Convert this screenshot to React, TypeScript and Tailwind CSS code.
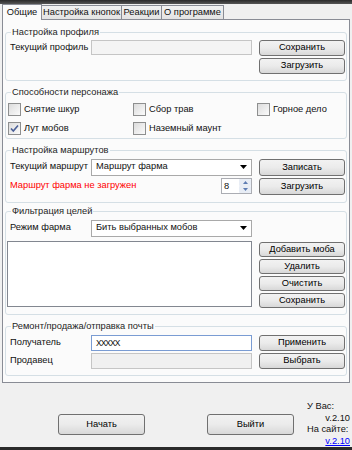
import React from "react";

function Btn({ label, className = "" }: { label: string; className?: string }) {
  return (
    <div
      className={`flex items-center justify-center whitespace-nowrap rounded-[3px] border border-[#707070] bg-gradient-to-b from-[#f2f2f2] via-[#ebebeb] to-[#d8d8d8] leading-none text-black ${className}`}
    >
      {label}
    </div>
  );
}

function Group({ title, className = "", children }: { title: string; className?: string; children?: React.ReactNode }) {
  return (
    <div className={`relative rounded-[3px] border border-[#d5dfe5] ${className}`}>
      <span className="absolute -top-[7px] left-[5px] whitespace-nowrap bg-[#fbfbfb] px-[1px] leading-[13px] text-[#1e1e1e]">
        {title}
      </span>
      {children}
    </div>
  );
}

function Check({ label, checked = false }: { label: string; checked?: boolean }) {
  return (
    <div className="flex items-center gap-[3px] whitespace-nowrap">
      <div className="flex h-[13px] w-[13px] items-center justify-center border border-[#8e8f8f] bg-gradient-to-br from-[#dcdcdc] to-[#fbfbfb]">
        {checked && (
          <svg width="11" height="11" viewBox="0 0 11 11">
            <path d="M2 5.5 L4.3 8 L9 2.5" fill="none" stroke="#4a5f97" strokeWidth="1.6" />
          </svg>
        )}
      </div>
      <span>{label}</span>
    </div>
  );
}

function Select({ value }: { value: string }) {
  return (
    <div className="flex h-[17px] w-[161px] items-center justify-between border border-[#a9a9a9] bg-white pl-[4px] pr-[4px]">
      <span className="whitespace-nowrap">{value}</span>
      <svg width="7" height="4" viewBox="0 0 7 4">
        <polygon points="0,0 7,0 3.5,4" fill="#000" />
      </svg>
    </div>
  );
}

const tabs = ["Общие", "Настройка кнопок", "Реакции", "О программе"];
const tabW = ["w-[40px]", "w-[81px]", "w-[41px]", "w-[63px]"];

export default function App() {
  return (
    <div className="flex h-[450px] w-[352px] flex-col overflow-hidden whitespace-nowrap bg-[#f0f0f0] font-['Liberation_Sans',Arial,sans-serif] text-[9.3px] text-[#111]">
      <div className="h-[4px] bg-gradient-to-b from-[#2a2a2a] to-[#555555]" />

      <div className="relative z-10 -mb-px flex h-[16px] items-end pl-[2px]">
        {tabs.map((t, i) => (
          <div
            key={t}
            className={`flex items-center justify-center border border-[#898c95] leading-none ${tabW[i]} ${
              i === 0
                ? "h-[16px] border-b-0 bg-[#fbfbfb]"
                : "-ml-px h-[15px] bg-gradient-to-b from-[#f2f2f2] to-[#e3e3e3]"
            }`}
          >
            {t}
          </div>
        ))}
      </div>

      <div className="mx-[2px] flex h-[369px] flex-col border border-[#898c95] bg-[#fbfbfb] px-[2px]">
        <Group title="Настройка профиля" className="mt-[12px] h-[49px] pt-[7px]">
          <div className="flex items-center pl-[4px] pr-[1px]">
            <span className="w-[81px]">Текущий профиль</span>
            <div className="h-[15px] w-[161px] border border-[#c5c5c5] bg-[#f4f4f4]" />
            <Btn label="Сохранить" className="ml-auto h-[16px] w-[86px]" />
          </div>
          <div className="mt-[2px] flex pr-[1px]">
            <Btn label="Загрузить" className="ml-auto h-[16px] w-[86px]" />
          </div>
        </Group>

        <Group title="Способности персонажа" className="mt-[11px] h-[47px] pt-[10px]">
          <div className="grid grid-cols-[125px_124px_1fr] gap-y-[5px] pl-[2px]">
            <Check label="Снятие шкур" />
            <Check label="Сбор трав" />
            <Check label="Горное дело" />
            <Check label="Лут мобов" checked />
            <Check label="Наземный маунт" />
          </div>
        </Group>

        <Group title="Настройка маршрутов" className="mt-[11px] h-[53px] pt-[8px]">
          <div className="flex items-center pl-[4px] pr-[1px]">
            <span className="w-[81px]">Текущий маршрут</span>
            <Select value="Маршрут фарма" />
            <Btn label="Записать" className="ml-auto h-[17px] w-[86px]" />
          </div>
          <div className="mt-[2px] flex items-center pl-[4px] pr-[1px]">
            <span className="w-[211px] text-[#ff0000]">Маршрут фарма не загружен</span>
            <div className="flex h-[16px] w-[31px] items-stretch border border-[#abadb3] bg-white">
              <span className="flex-1 pl-[2px] leading-[14px]">8</span>
              <div className="flex w-[12px] flex-col">
                <div className="flex flex-1 items-center justify-center rounded-[1px] bg-[#e8edf5]">
                  <svg width="5" height="3" viewBox="0 0 5 3"><polygon points="0,3 5,3 2.5,0" fill="#5d7cb3" /></svg>
                </div>
                <div className="flex flex-1 items-center justify-center rounded-[1px] bg-[#e8edf5]">
                  <svg width="5" height="3" viewBox="0 0 5 3"><polygon points="0,0 5,0 2.5,3" fill="#5d7cb3" /></svg>
                </div>
              </div>
            </div>
            <Btn label="Загрузить" className="ml-auto h-[17px] w-[86px]" />
          </div>
        </Group>

        <Group title="Фильтрация целей" className="mt-[8px] h-[104px] pt-[8px]">
          <div className="flex items-center pl-[4px] pr-[1px]">
            <span className="w-[81px]">Режим фарма</span>
            <Select value="Бить выбранных мобов" />
          </div>
          <div className="mt-[4px] flex pl-[1px] pr-[1px]">
            <div className="h-[66px] w-[245px] border border-[#828790] bg-white" />
            <div className="ml-auto flex w-[86px] flex-col gap-[2px] pt-[1px]">
              <Btn label="Добавить моба" className="h-[15px]" />
              <Btn label="Удалить" className="h-[15px]" />
              <Btn label="Очистить" className="h-[15px]" />
              <Btn label="Сохранить" className="h-[15px]" />
            </div>
          </div>
        </Group>

        <Group title="Ремонт/продажа/отправка почты" className="mt-[11px] h-[50px] pt-[8px]">
          <div className="flex items-center pl-[4px] pr-[1px]">
            <span className="w-[81px]">Получатель</span>
            <div className="flex h-[16px] w-[161px] items-center border border-[#7a9cd3] bg-white pl-[4px] text-[8.5px] tracking-[-1px]">
              XXXXX
            </div>
            <Btn label="Применить" className="ml-auto h-[16px] w-[86px]" />
          </div>
          <div className="mt-[2px] flex items-center pl-[4px] pr-[1px]">
            <span className="w-[81px]">Продавец</span>
            <div className="h-[16px] w-[161px] border border-[#c5c5c5] bg-[#f0f0f0]" />
            <Btn label="Выбрать" className="ml-auto h-[16px] w-[86px]" />
          </div>
        </Group>
      </div>

      <div className="flex flex-1 items-start pl-[58px]">
        <Btn label="Начать" className="mt-[31px] h-[21px] w-[87px]" />
        <Btn label="Выйти" className="ml-[62px] mt-[31px] h-[21px] w-[87px]" />
        <div className="ml-[13px] mt-[18px] flex w-[43px] flex-col leading-[11.5px]">
          <span>У Вас:</span>
          <span className="text-right">v.2.10</span>
          <span>На сайте:</span>
          <span className="text-right text-[#0000ff] underline">v.2.10</span>
        </div>
      </div>

      <div className="h-[3px] bg-[#2a2a2a]" />
    </div>
  );
}
